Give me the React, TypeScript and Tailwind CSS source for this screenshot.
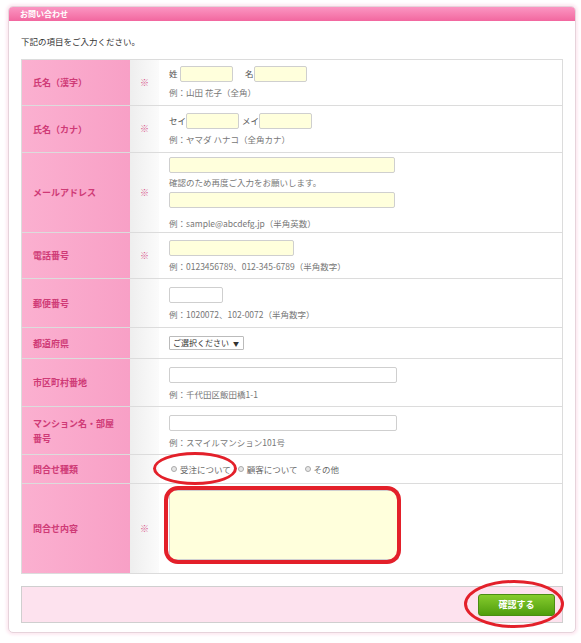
import React from 'react';

const font = { fontFamily: '"Noto Sans CJK JP", "Noto Sans", sans-serif' };

const Input = ({ w, white }: { w: string; white?: boolean }) => (
    <span className={`inline-block shrink-0 h-[16px] ${w} rounded-[2px] border border-[#cfcfcf] ${white ? 'bg-white' : 'bg-[#ffffdc]'}`} />
);

const Note = ({ children }: { children: React.ReactNode }) => (
    <div className="text-[8.5px] leading-[10px] text-[#777] whitespace-nowrap">{children}</div>
);

const Row = ({ label, req, h, children }: { label: React.ReactNode; req?: boolean; h: string; children: React.ReactNode }) => (
    <div className={`flex ${h} border-b border-[#dcdcdc]`}>
        <div className="w-[108px] shrink-0 flex items-center pl-[11px] bg-gradient-to-r from-[#fbb0d0] to-[#f8a0c6] text-[9px] leading-[15px] font-bold text-[#cf3a76]">
            {label}
        </div>
        <div className="w-[29px] shrink-0 flex items-center justify-center bg-gradient-to-r from-[#eeeeee] to-[#fbfbfb] text-[9px] text-[#d9578c]">
            {req ? '※' : ''}
        </div>
        <div className="flex-1 flex flex-col justify-center pl-[10px] bg-white">{children}</div>
    </div>
);

const Radio = ({ label }: { label: string }) => (
    <span className="flex items-center gap-[3px] whitespace-nowrap">
        <span className="inline-block w-[6px] h-[6px] rounded-full border border-[#aaa] bg-[#e6e6e6]" />
        <span>{label}</span>
    </span>
);

const App = () => {
    return (
        <div className="relative w-[581px] h-[643px] bg-white pt-[6px] pl-[8px]" style={font}>
            <div className="w-[568px] h-[627px] border border-[#e6d3db] rounded-[5px] bg-white shadow-[0_0_3px_2px_#fdeaf2]">
                <div className="h-[14px] rounded-t-[4px] bg-gradient-to-b from-[#fa95c2] to-[#f2679f] flex items-center pl-[11px] text-[8px] font-bold text-white">
                    お問い合わせ
                </div>
                <div className="px-[12px]">
                    <div className="pt-[14px] h-[38px] text-[8.5px] text-[#333]">下記の項目をご入力ください。</div>
                    <div className="w-[542px] border border-[#dcdcdc] border-b-0">
                        <Row label="氏名（漢字）" req h="h-[46px]">
                            <div className="flex items-center text-[8.5px] text-[#555] -mt-[3px] whitespace-nowrap">
                                <span className="w-[11px] shrink-0">姓</span>
                                <Input w="w-[53px]" />
                                <span className="ml-[12px] w-[9px] shrink-0">名</span>
                                <Input w="w-[53px]" />
                            </div>
                            <div className="mt-[5px]"><Note>例：山田 花子（全角）</Note></div>
                        </Row>
                        <Row label="氏名（カナ）" req h="h-[47px]">
                            <div className="flex items-center text-[8.5px] text-[#555] -mt-[2px] whitespace-nowrap">
                                <span className="w-[17px] shrink-0">セイ</span>
                                <Input w="w-[53px]" />
                                <span className="ml-[3px] w-[17px] shrink-0">メイ</span>
                                <Input w="w-[53px]" />
                            </div>
                            <div className="mt-[5px]"><Note>例：ヤマダ ハナコ（全角カナ）</Note></div>
                        </Row>
                        <Row label="メールアドレス" req h="h-[80px]">
                            <Input w="w-[226px]" />
                            <div className="mt-[4px]"><Note>確認のため再度ご入力をお願いします。</Note></div>
                            <div className="mt-[2px]"><Input w="w-[226px]" /></div>
                            <div className="mt-[5px]"><Note>例：sample@abcdefg.jp（半角英数）</Note></div>
                        </Row>
                        <Row label="電話番号" req h="h-[46px]">
                            <Input w="w-[125px]" />
                            <div className="mt-[5px]"><Note>例：0123456789、012-345-6789（半角数字）</Note></div>
                        </Row>
                        <Row label="郵便番号" h="h-[49px]">
                            <Input w="w-[54px]" white />
                            <div className="mt-[6px]"><Note>例：1020072、102-0072（半角数字）</Note></div>
                        </Row>
                        <Row label="都道府県" h="h-[31px]">
                            <span className="inline-flex items-center h-[14px] w-[75px] border border-[#bbb] rounded-[1px] pl-[3px] text-[8px] text-[#333] bg-white whitespace-nowrap">
                                ご選択ください<span className="ml-[4px] text-[6px]">▼</span>
                            </span>
                        </Row>
                        <Row label="市区町村番地" h="h-[48px]">
                            <Input w="w-[228px]" white />
                            <div className="mt-[6px]"><Note>例：千代田区飯田橋1-1</Note></div>
                        </Row>
                        <Row label={<span>マンション名・部屋<br />番号</span>} h="h-[48px]">
                            <Input w="w-[228px]" white />
                            <div className="mt-[6px]"><Note>例：スマイルマンション101号</Note></div>
                        </Row>
                        <Row label="問合せ種類" h="h-[29px]">
                            <div className="flex items-center gap-[7px] text-[8.5px] text-[#666] pl-[2px]">
                                <Radio label="受注について" />
                                <Radio label="顧客について" />
                                <Radio label="その他" />
                            </div>
                        </Row>
                        <Row label="問合せ内容" req h="h-[90px]">
                            <span className="block w-[230px] h-[70px] -mt-[8px] border border-[#d0d0d0] rounded-[2px] bg-[#ffffdc]" />
                        </Row>
                    </div>
                    <div className="mt-[12px] w-[542px] h-[37px] border border-[#cfcfcf] bg-[#fde2ee] flex items-center justify-end pr-[7px]">
                        <button className="w-[77px] h-[22px] rounded-[3px] bg-gradient-to-b from-[#86cc2c] to-[#4f9d0c] border border-[#4a8d12] text-[9px] font-bold text-white">
                            確認する
                        </button>
                    </div>
                </div>
            </div>

            {/* red annotation marks */}
            <div className="absolute left-[153px] top-[452px] w-[84px] h-[33px] rounded-[50%] border-[3px] border-[#e3202a]" />
            <div className="absolute left-[164px] top-[486px] w-[237px] h-[78px] rounded-[14px] border-[4px] border-[#e3202a]" />
            <div className="absolute left-[464px] top-[580px] w-[100px] h-[48px] rounded-[50%] border-[3px] border-[#e3202a]" />
        </div>
    );
};

export default App;
